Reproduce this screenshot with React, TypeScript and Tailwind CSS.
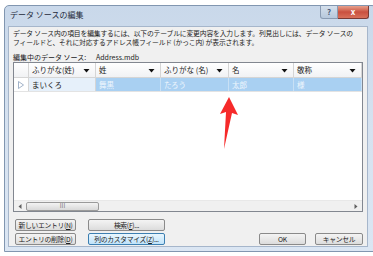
import React from 'react';

// Win7 style "データ ソースの編集" dialog
const cols = [
  { label: 'ふりがな(姓)', w: 'w-[67px]', value: 'まいくろ' },
  { label: '姓', w: 'w-[65px]', value: '舞黒' },
  { label: 'ふりがな (名)', w: 'w-[68px]', value: 'たろう' },
  { label: '名', w: 'w-[65px]', value: '太郎' },
  { label: '敬称', w: 'flex-1', value: '様' },
];

const Btn: React.FC<{ w: string; focused?: boolean; children: React.ReactNode }> = ({ w, focused, children }) => (
  <div
    className={`${w} h-[12px] rounded-[2px] border flex items-center justify-center text-[6.8px] leading-none tracking-[-0.3px] whitespace-nowrap text-[#222] ${
      focused
        ? 'border-[#3c7fb1] bg-gradient-to-b from-[#eaf6fd] to-[#bfe3fa]'
        : 'border-[#8a8a8a] bg-gradient-to-b from-[#f4f4f4] to-[#dcdcdc]'
    }`}
  >
    {children}
  </div>
);

const Arrow = () => (
  <svg width="7" height="5" viewBox="0 0 7 5" className="shrink-0">
    <path d="M0.5 1 L6.5 1 L3.5 4.5 Z" fill="#111" />
  </svg>
);

export default function App() {
  return (
    <div className="w-[373px] h-[256px] bg-white relative overflow-hidden font-['Noto_Sans_CJK_JP',sans-serif]">
      <div className="ml-[4px] mt-[5px] w-[373px] h-[247px] rounded-t-[5px] border border-[#8196b0] bg-gradient-to-b from-[#c9d8ea] via-[#d6e2f0] to-[#dbe6f3] flex flex-col">
        {/* title bar */}
        <div className="h-[20px] flex items-start">
          <div className="pl-[5px] pt-[4px] text-[8px] leading-[10px] text-[#1e2a3a]">データ ソースの編集</div>
          <div className="ml-auto mr-[7px] flex">
            <div className="w-[18px] h-[13px] rounded-bl-[3px] border border-t-0 border-[#8a9bb2] bg-gradient-to-b from-[#d5e0ec] to-[#b7c8dc] flex items-center justify-center text-[8px] leading-none text-[#4a5d78] font-bold">?</div>
            <div className="w-[31px] h-[13px] rounded-br-[3px] border border-t-0 border-l-0 border-[#7a3a34] bg-gradient-to-b from-[#e6a08c] via-[#c9503f] to-[#d8705a] flex items-center justify-center text-[8px] leading-none text-white font-bold">x</div>
          </div>
        </div>

        {/* client area */}
        <div className="ml-[3px] w-[360px] h-[221px] border border-[#a6b6cb] bg-[#f0f0f0] flex flex-col px-[4px]">
          <div className="pt-[2px] text-[6.8px] leading-[8.5px] text-[#222] whitespace-nowrap tracking-[-0.15px]">
            <div>データ ソース内の項目を編集するには、以下のテーブルに変更内容を入力します。列見出しには、データ ソースの</div>
            <div>フィールドと、それに対応するアドレス帳フィールド (かっこ内) が表示されます。</div>
          </div>
          <div className="mt-[7px] h-[8px] flex items-center text-[7px] leading-none text-[#222]">
            <span className="w-[83px]">編集中のデータ ソース:</span>
            <span>Address.mdb</span>
          </div>

          {/* grid */}
          <div className="mt-[1px] w-[350px] h-[150px] border border-[#828790] bg-white flex flex-col">
            <div className="h-[15px] flex border-b border-[#d5d5d5] bg-gradient-to-b from-white to-[#f1f2f4]">
              <div className="w-[15px] border-r border-[#d5d5d5]" />
              {cols.map((c) => (
                <div key={c.label} className={`${c.w} flex items-center border-r border-[#d5d5d5] pl-[3px] pr-[5px] text-[7.5px] leading-none text-[#222]`}>
                  <span className="flex-1 whitespace-nowrap">{c.label}</span>
                  <Arrow />
                </div>
              ))}
            </div>
            <div className="h-[14px] flex border-b border-[#e3e3e3]">
              <div className="w-[15px] border-r border-[#d5d5d5] flex items-center justify-center">
                <svg width="6" height="8" viewBox="0 0 6 8">
                  <path d="M0.5 0.5 L5.5 4 L0.5 7.5 Z" fill="none" stroke="#8aa0bb" strokeWidth="0.8" />
                </svg>
              </div>
              {cols.map((c, i) => (
                <div
                  key={c.label}
                  className={`${c.w} flex items-center border-r pl-[3px] text-[7.5px] leading-none ${
                    i === 0 ? 'bg-[#e6f0fa] border-[#d5d5d5] text-[#222]' : 'bg-[#a9d0f2] border-[#c8e0f5] text-[#eef6fd]'
                  }`}
                >
                  {c.value}
                </div>
              ))}
            </div>
            <div className="flex-1" />
            {/* horizontal scrollbar */}
            <div className="h-[11px] flex items-center bg-[#f0f0f0] border-t border-[#e8e8e8]">
              <div className="w-[12px] flex items-center justify-center">
                <svg width="4" height="5" viewBox="0 0 4 5"><path d="M3.5 0 L0.5 2.5 L3.5 5 Z" fill="#606060" /></svg>
              </div>
              <div className="w-[73px] h-[9px] rounded-[2px] border border-[#9a9a9a] bg-gradient-to-b from-[#f3f3f3] to-[#d9d9d9] flex items-center justify-center text-[6px] leading-none text-[#777]">III</div>
              <div className="flex-1" />
              <div className="w-[12px] flex items-center justify-center">
                <svg width="4" height="5" viewBox="0 0 4 5"><path d="M0.5 0 L3.5 2.5 L0.5 5 Z" fill="#606060" /></svg>
              </div>
            </div>
          </div>

          {/* buttons */}
          <div className="mt-[7px] flex pl-[2px] gap-[12px]">
            <Btn w="w-[61px]">新しいエントリ(<u>N</u>)</Btn>
            <Btn w="w-[77px]">検索(<u>F</u>)...</Btn>
          </div>
          <div className="mt-[2px] flex pl-[2px]">
            <Btn w="w-[61px]">エントリの削除(<u>D</u>)</Btn>
            <div className="w-[12px]" />
            <Btn w="w-[77px]" focused>列のカスタマイズ(<u>Z</u>)...</Btn>
            <div className="w-[94px]" />
            <Btn w="w-[47px]">OK</Btn>
            <div className="w-[9px]" />
            <Btn w="w-[48px]">キャンセル</Btn>
          </div>
        </div>
      </div>

      {/* red annotation arrow */}
      <svg className="absolute left-0 top-0 pointer-events-none" width="373" height="256" viewBox="0 0 373 256">
        <path d="M229 97 L238 115 L232 113 L224 149 L226 112 L220 114 Z" fill="#f62a2a" />
      </svg>
    </div>
  );
}
